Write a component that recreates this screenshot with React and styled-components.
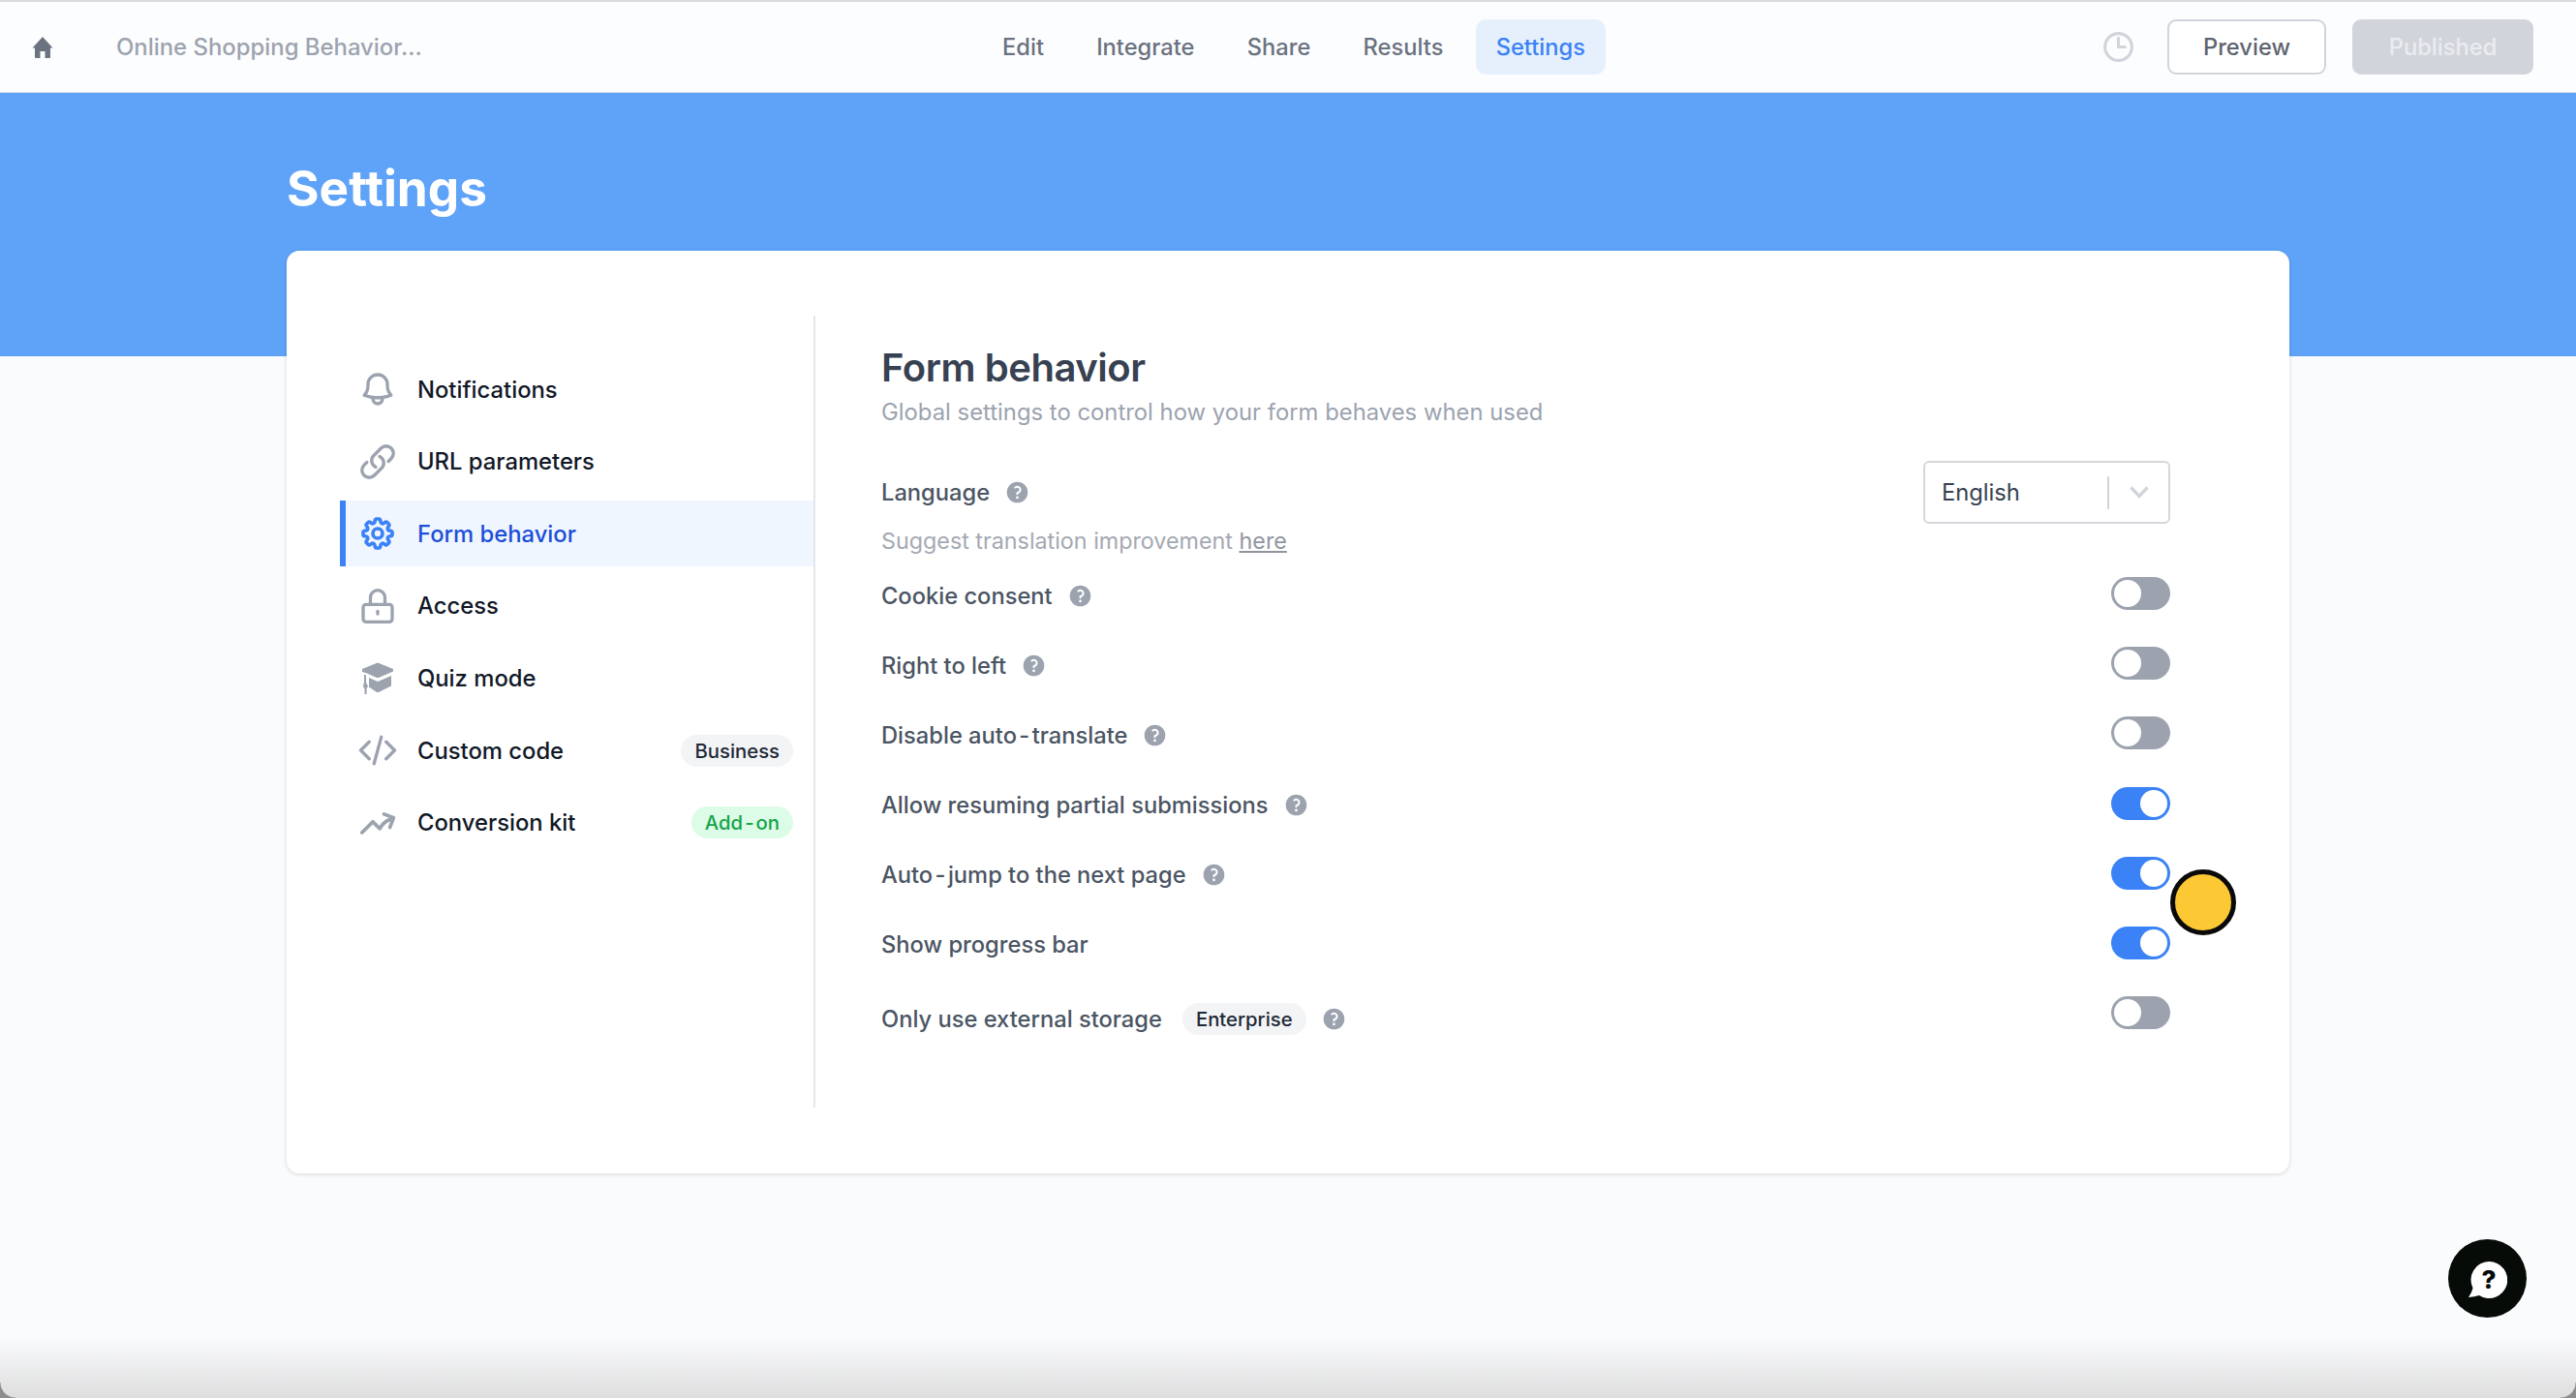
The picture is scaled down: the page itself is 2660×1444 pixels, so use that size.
import React from 'react';
import styled, { createGlobalStyle } from 'styled-components';
import {
  HiOutlineBell,
  HiOutlineLink,
  HiOutlineCog8Tooth,
  HiOutlineCodeBracket,
  HiArrowTrendingUp,
  HiOutlineClock,
  HiMiniQuestionMarkCircle,
} from 'react-icons/hi2';

const GlobalStyle = createGlobalStyle`
  * { box-sizing: border-box; }
  html, body {
    margin: 0;
    padding: 0;
    background: #fafbfd;
    font-family: Inter, "Liberation Sans", sans-serif;
  }
`;

const Page = styled.div`
  position: relative;
  width: 2660px;
  height: 1444px;
  overflow: hidden;
  background: #fafbfd;
`;

const Header = styled.header`
  display: flex;
  align-items: center;
  height: 96px;
  padding: 0 44px 0 33px;
  background: #fcfdfe;
  border-top: 2px solid #d8dade;
  border-bottom: 1px solid #d5dbe3;
`;

const HeaderLeft = styled.div`
  display: flex;
  align-items: center;
  gap: 65px;
  flex: 0 0 981px;
`;

const ProjectName = styled.span`
  font-size: 23.9px;
  font-weight: 500;
  color: #9ca3af;
`;

const Nav = styled.nav`
  display: flex;
  gap: 12.2px;
`;

const NavButton = styled.div`
  display: flex;
  align-items: center;
  height: 57px;
  padding: 0 21px;
  border-radius: 11px;
  font-size: 23.7px;
  font-weight: 500;
  color: ${(p) => (p.$active ? '#3b82f6' : '#6b7280')};
  background: ${(p) => (p.$active ? '#e6f0fd' : 'transparent')};
`;

const HeaderRight = styled.div`
  display: flex;
  align-items: center;
  margin-left: auto;
`;

const ClockIcon = styled(HiOutlineClock)`
  font-size: 37px;
  color: #d1d5db;
  margin-right: 32px;
  stroke-width: 2;
`;

const PreviewButton = styled.div`
  display: flex;
  align-items: center;
  justify-content: center;
  width: 164px;
  height: 57px;
  border: 2px solid #d1d5db;
  border-radius: 9px;
  background: #fff;
  font-size: 23.7px;
  font-weight: 500;
  color: #5f6470;
`;

const PublishedButton = styled.div`
  display: flex;
  align-items: center;
  justify-content: center;
  width: 187px;
  height: 57px;
  margin-left: 27px;
  border-radius: 9px;
  background: #d1d5db;
  font-size: 23.7px;
  font-weight: 500;
  color: #eaecef;
`;

const Main = styled.main`
  padding: 0 296px;
  background: linear-gradient(#5fa3f9 272px, transparent 272px);
`;

const PageTitle = styled.h1`
  margin: 0;
  padding: 67.5px 0 35.5px;
  font-size: 51.3px;
  line-height: 60px;
  font-weight: 700;
  color: #fff;
`;

const Card = styled.section`
  display: flex;
  height: 953px;
  padding: 67px 123px 68px 55px;
  background: #fff;
  border-radius: 13px;
  box-shadow: 0 1px 4px rgba(0, 0, 0, 0.14);
`;

const Sidebar = styled.aside`
  display: flex;
  flex-direction: column;
  gap: 6.67px;
  width: 491px;
  flex-shrink: 0;
  padding-top: 42px;
  border-right: 2px solid #e5e7eb;
`;

const SideItem = styled.div`
  display: flex;
  align-items: center;
  height: 68px;
  padding: 0 21px 0 ${(p) => (p.$active ? '13px' : '19px')};
  border-left: ${(p) => (p.$active ? '6px solid #3b82f6' : 'none')};
  background: ${(p) => (p.$active ? '#eff6ff' : 'transparent')};
  color: ${(p) => (p.$active ? '#1d4ed8' : '#111827')};
  font-size: 23.8px;
  font-weight: 500;

  svg {
    flex-shrink: 0;
    font-size: 40px;
    color: ${(p) => (p.$active ? '#3b82f6' : '#9ca3af')};
    margin-right: 21px;
    stroke-width: ${(p) => p.$stroke};
  }
`;

const Badge = styled.span`
  display: inline-flex;
  align-items: center;
  height: 33px;
  padding: 0 14px;
  border-radius: 17px;
  font-size: 20.3px;
  font-weight: 500;
  color: ${(p) => (p.$green ? '#16a34a' : '#1f2937')};
  background: ${(p) => (p.$green ? '#dcfce7' : '#f3f4f6')};
`;

const SideBadge = styled(Badge)`
  margin-left: auto;
`;

const Hyphen = styled.span`
  margin: 0 0.1em;
`;

const Content = styled.div`
  flex: 1;
  padding: 34px 0 0 68px;
`;

const Heading = styled.h2`
  margin: 0;
  font-size: 40px;
  line-height: 40px;
  font-weight: 600;
  letter-spacing: -0.45px;
  color: #374151;
`;

const Subtitle = styled.p`
  margin: 9px 0 33px;
  font-size: 23.85px;
  line-height: 34px;
  color: #9ca3af;
`;

const LanguageRow = styled.div`
  display: flex;
  align-items: center;
  justify-content: space-between;
  height: 65px;
`;

const Select = styled.div`
  display: flex;
  align-items: center;
  width: 255px;
  height: 65px;
  padding: 0 20px 0 17px;
  border: 2px solid #d5d7db;
  border-radius: 6px;
  font-size: 23.7px;
  color: #374151;
`;

const SelectSep = styled.span`
  width: 2px;
  height: 34px;
  margin-left: auto;
  margin-right: 21px;
  background: #d1d5db;
`;

const Hint = styled.p`
  margin: 1px 0 20px;
  font-size: 23.3px;
  line-height: 34px;
  color: #a4a9b2;

  a {
    color: #9095a0;
    text-decoration: underline;
  }
`;

const Row = styled.div`
  display: flex;
  align-items: flex-start;
  justify-content: space-between;
  height: 72.2px;
`;

const Label = styled.div`
  display: flex;
  align-items: center;
  height: ${(p) => (p.$tall ? '47px' : '38px')};
  font-size: 23.7px;
  font-weight: 500;
  color: #4b5563;
`;

const HelpIcon = styled(HiMiniQuestionMarkCircle)`
  font-size: 27px;
  color: #9ca3af;
  margin-left: 15px;
`;

const RowBadge = styled(Badge)`
  margin-left: 21px;
`;

const Toggle = styled.div`
  display: flex;
  justify-content: ${(p) => (p.$on ? 'flex-end' : 'flex-start')};
  align-items: center;
  width: 61px;
  height: 34px;
  padding: 0 3px;
  border-radius: 17px;
  background: ${(p) => (p.$on ? '#3b82f6' : '#9ca3af')};

  &::after {
    content: '';
    width: 28px;
    height: 28px;
    border-radius: 50%;
    background: #fff;
  }
`;

const CursorDot = styled.div`
  position: absolute;
  left: 2241px;
  top: 898px;
  width: 68px;
  height: 68px;
  border: 5px solid #0a0a0a;
  border-radius: 50%;
  background: #fcc834;
`;

const ChatButton = styled.div`
  position: absolute;
  left: 2528px;
  top: 1280px;
  display: flex;
  align-items: center;
  justify-content: center;
  width: 81px;
  height: 81px;
  border-radius: 50%;
  background: #060b08;
`;

const BottomShade = styled.div`
  position: absolute;
  left: 0;
  right: 0;
  bottom: 0;
  height: 64px;
  pointer-events: none;
  background:
    radial-gradient(circle at 100% 0, transparent 15px, #8d8d8d 16px) left bottom / 16px 16px no-repeat,
    radial-gradient(circle at 0 0, transparent 15px, #8d8d8d 16px) right bottom / 16px 16px no-repeat,
    linear-gradient(rgba(210, 210, 210, 0), rgba(210, 210, 210, 0.7));
`;

const HomeIcon = () => (
  <svg width="22" height="22" viewBox="0 0 22 22" fill="#6b7280">
    <path d="M11 0 L21.5 11.5 L19 11.5 L19 21 Q19 22 18 22 L13.5 22 L13.5 15 L8.5 15 L8.5 22 L4 22 Q3 22 3 21 L3 11.5 L0.5 11.5 Z" />
  </svg>
);

const LockIcon = () => (
  <svg width="40" height="40" viewBox="0 0 24 24" fill="none" stroke="currentColor" strokeLinecap="round">
    <rect x="3" y="11" width="18" height="10.8" rx="1.8" />
    <path d="M7.5 11 V6.7 a4.5 4.5 0 0 1 9 0 V11" />
    <path d="M12 15.2 V16.8" />
  </svg>
);

const CapIcon = () => (
  <svg width="40" height="40" viewBox="0 0 40 40" fill="currentColor">
    <path d="M20 3.5 L36 10 L36 12.5 L21 19 L19 19 L9 14.5 L4 13 L4 10 Z" />
    <path d="M11 19 L20 23 L34 17 L34 27.5 L21 34 L19 34 L11 28.5 Z" />
    <path d="M6 15.5 L8 16.5 L8 24 L10 28 L8.6 30 L8.6 36 L6.6 36 L6.4 30 L4.8 28 L6 24 Z" />
  </svg>
);

const ChevronIcon = () => (
  <svg width="20" height="13" viewBox="0 0 20 13" fill="none" stroke="#d1d5db" strokeWidth="3.4">
    <path d="M1.5 1.5 L10 10.5 L18.5 1.5" />
  </svg>
);

const ChatIcon = () => (
  <svg width="40" height="40" viewBox="0 0 40 40">
    <path d="M21 2 A19 19 0 1 1 11 37 Q6 38.5 0 39 Q3.5 34 4.5 29.5 A19 19 0 0 1 21 2 Z" fill="#fff" />
    <text x="21" y="30" textAnchor="middle" fontFamily="Inter, sans-serif" fontWeight="800" fontSize="26" fill="#060b08">?</text>
  </svg>
);

// the reference font draws a wider hyphen than the installed Inter
const spacedHyphen = (text) => {
  const parts = text.split('-');
  if (parts.length === 1) return text;
  return (
    <span>
      {parts[0]}
      <Hyphen>-</Hyphen>
      {parts[1]}
    </span>
  );
};

const sideItems = [
  { label: 'Notifications', icon: HiOutlineBell, stroke: 2 },
  { label: 'URL parameters', icon: HiOutlineLink, stroke: 2 },
  { label: 'Form behavior', icon: HiOutlineCog8Tooth, stroke: 2.2, active: true },
  { label: 'Access', icon: LockIcon, stroke: 2 },
  { label: 'Quiz mode', icon: CapIcon, stroke: 0 },
  { label: 'Custom code', icon: HiOutlineCodeBracket, stroke: 2, badge: 'Business' },
  { label: 'Conversion kit', icon: HiArrowTrendingUp, stroke: 0.7, badge: 'Add-on', green: true },
];

const settings = [
  { label: 'Cookie consent', help: true },
  { label: 'Right to left', help: true },
  { label: 'Disable auto-translate', help: true },
  { label: 'Allow resuming partial submissions', help: true, on: true },
  { label: 'Auto-jump to the next page', help: true, on: true },
  { label: 'Show progress bar', on: true },
  { label: 'Only use external storage', help: true, badge: 'Enterprise' },
];

const App = () => {
  return (
    <Page>
      <GlobalStyle />
      <Header>
        <HeaderLeft>
          <HomeIcon />
          <ProjectName>Online Shopping Behavior...</ProjectName>
        </HeaderLeft>
        <Nav>
          <NavButton>Edit</NavButton>
          <NavButton>Integrate</NavButton>
          <NavButton>Share</NavButton>
          <NavButton>Results</NavButton>
          <NavButton $active>Settings</NavButton>
        </Nav>
        <HeaderRight>
          <ClockIcon />
          <PreviewButton>Preview</PreviewButton>
          <PublishedButton>Published</PublishedButton>
        </HeaderRight>
      </Header>

      <Main>
        <PageTitle>Settings</PageTitle>
        <Card>
          <Sidebar>
            {sideItems.map((item) => (
              <SideItem key={item.label} $active={item.active} $stroke={item.stroke}>
                <item.icon />
                {item.label}
                {item.badge && <SideBadge $green={item.green}>{spacedHyphen(item.badge)}</SideBadge>}
              </SideItem>
            ))}
          </Sidebar>

          <Content>
            <Heading>Form behavior</Heading>
            <Subtitle>Global settings to control how your form behaves when used</Subtitle>
            <LanguageRow>
              <Label>
                Language
                <HelpIcon />
              </Label>
              <Select>
                English
                <SelectSep />
                <ChevronIcon />
              </Select>
            </LanguageRow>
            <Hint>
              Suggest translation improvement <a href="#here">here</a>
            </Hint>
            {settings.map((s) => (
              <Row key={s.label}>
                <Label $tall={!!s.badge}>
                  {spacedHyphen(s.label)}
                  {s.badge && <RowBadge>{s.badge}</RowBadge>}
                  {s.help && <HelpIcon />}
                </Label>
                <Toggle $on={s.on} />
              </Row>
            ))}
          </Content>
        </Card>
      </Main>

      <CursorDot />
      <ChatButton>
        <ChatIcon />
      </ChatButton>
      <BottomShade />
    </Page>
  );
};

export default App;
